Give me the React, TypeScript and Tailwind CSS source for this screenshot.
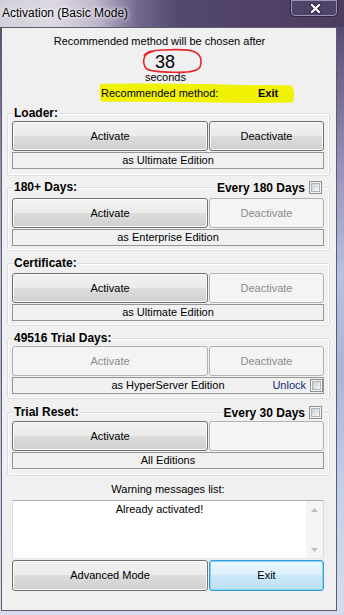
import React from "react";

const base =
  "flex items-center justify-center h-[30px] rounded-[3px] border text-[11px] leading-[13px]";
const normal =
  "border-[#707070] text-black bg-[linear-gradient(to_bottom,#f2f2f2_0%,#ebebeb_50%,#dddddd_50%,#cfcfcf_100%)] shadow-[inset_0_0_0_1px_#fbfbfb]";
const disabled = "border-[#adb2b5] text-[#8b8b8b] bg-[#f4f4f4]";

function Btn({ label, off }: { label?: string; off?: boolean }) {
  return <div className={`${base} ${off ? disabled : normal}`}>{label}</div>;
}

function CheckBox() {
  return (
    <span className="flex w-[13px] h-[13px] shrink-0 border border-[#8e8f8f] bg-[#f4f4f4] p-[1px]">
      <span className="flex-1 border border-[#aeb3b9] bg-[linear-gradient(135deg,#c9cdd2_0%,#e2e4e6_55%,#f8f8f8_100%)]" />
    </span>
  );
}

function Group({
  title,
  right,
  box,
  leftOff,
  rightLabel,
  rightOff,
  children,
}: {
  title: string;
  right?: string;
  box: string;
  leftOff?: boolean;
  rightLabel?: string;
  rightOff?: boolean;
  children: React.ReactNode;
}) {
  return (
    <div
      className={`relative ml-[5px] w-[323px] rounded-[3px] border border-[#d5dfe5] shadow-[inset_0_0_0_1px_#ffffff] pl-[4px] pr-[5px] ${box}`}
    >
      <span className="absolute -top-[7px] left-[5px] bg-[#f0f0f0] px-[1px] text-[12px] leading-[12px] font-bold">
        {title}
      </span>
      {right && (
        <div className="absolute -top-[7px] right-[5px] flex h-[13px] items-center gap-[4px] bg-[#f0f0f0] px-[2px]">
          <span className="text-[12px] leading-[12px] font-bold">{right}</span>
          <CheckBox />
        </div>
      )}
      <div className="grid grid-cols-[196px_115px] gap-x-[1px]">
        <Btn label="Activate" off={leftOff} />
        <Btn label={rightLabel} off={rightOff} />
      </div>
      <div className="mt-[1px] h-[17px] border border-[#959595] bg-[#f0f0f0] text-[11px] leading-[13px]">
        {children}
      </div>
    </div>
  );
}

function Centered({ text }: { text: string }) {
  return <div className="flex h-full items-center justify-center">{text}</div>;
}

export default function App() {
  return (
    <div className="w-[344px] h-[615px] overflow-hidden font-['Liberation_Sans',Arial,sans-serif] text-black bg-[linear-gradient(to_bottom,#4b3e60_0%,#6d6290_12%,#9a92c0_28%,#b6c2e0_45%,#a9b3d9_60%,#c3d0ea_80%,#d5dded_100%)]">
      {/* Title bar */}
      <div className="flex h-[27px] bg-[linear-gradient(to_right,#d4d0da_0%,#dcd8e2_16%,#bfb7cc_28%,#75688e_40%,#54476c_52%,#4a3d60_100%)]">
        <span className="pl-[2px] pt-[6px] text-[12px] leading-[14px] [text-shadow:0_0_6px_rgba(255,255,255,0.95),0_0_3px_rgba(255,255,255,0.95)]">
          Activation (Basic Mode)
        </span>
        <div className="ml-auto mr-[6px] -mt-px flex h-[18px] w-[48px] items-center justify-center rounded-b-[5px] border border-[#2c2440] bg-[#4f4369] shadow-[inset_0_0_0_1px_#9d93b6]">
          <svg width="13" height="11" viewBox="0 0 13 11" className="mt-[1px] ml-[2px]">
            <path d="M3 2 L10 9 M10 2 L3 9" stroke="#2a2238" strokeWidth="4" strokeLinecap="square" />
            <path d="M3 2 L10 9 M10 2 L3 9" stroke="#ffffff" strokeWidth="2.2" strokeLinecap="square" />
          </svg>
        </div>
      </div>

      {/* Client area */}
      <div className="ml-[1px] w-[336px] flex flex-col border border-[#5e5e6a] bg-[#f0f0f0] pt-[7px] pb-[19px] text-[11px] leading-[13px]">
        <div className="w-[315px] text-center">Recommended method will be chosen after</div>
        <div className="relative mt-[5px] w-[326px] text-center text-[18px] leading-[18px]">
          38
          <svg
            className="absolute left-[139px] -top-[5px]"
            width="66"
            height="28"
            viewBox="0 0 66 28"
            fill="none"
          >
            <path
              d="M3 8 C 6 3, 12 2.5, 22 2 C 35 1.3, 48 1, 54 4 C 60 7, 61 13, 59 19 C 56 24, 45 24.5, 35 24.3 C 22 24, 10 24, 6 21 C 2 18, 2 12, 4 8 C 6 5, 9 4, 13 3"
              stroke="#e3262b"
              strokeWidth="1.6"
            />
          </svg>
        </div>
        <div className="w-[327px] text-center">seconds</div>
        <div className="relative mt-[3px] flex h-[13px]">
          <svg className="absolute left-[96px] -top-[4px]" width="198" height="21" viewBox="0 0 198 21">
            <path
              d="M2 0.8 Q 60 0 110 1 Q 140 2.6 170 2 L 194 2.4 Q 197.5 10 195 19.5 L 150 20 Q 80 18.5 3 18.7 Q 1 10 2 0.8 Z"
              fill="#f1f105"
            />
          </svg>
          <span className="relative ml-[99px] w-[157px]">Recommended method:</span>
          <span className="relative font-bold">Exit</span>
        </div>

        <Group title="Loader:" box="mt-[13px] pt-[7px] pb-[6px]" rightLabel="Deactivate">
          <Centered text="as Ultimate Edition" />
        </Group>

        <Group
          title="180+ Days:"
          right="Every 180 Days"
          box="mt-[11px] pt-[10px] pb-[4px]"
          rightLabel="Deactivate"
          rightOff
        >
          <Centered text="as Enterprise Edition" />
        </Group>

        <Group title="Certificate:" box="mt-[12px] pt-[9px] pb-[4px]" rightLabel="Deactivate" rightOff>
          <Centered text="as Ultimate Edition" />
        </Group>

        <Group
          title="49516 Trial Days:"
          box="mt-[12px] pt-[7px] pb-[4px]"
          leftOff
          rightLabel="Deactivate"
          rightOff
        >
          <div className="grid h-full grid-cols-[1fr_auto_1fr] items-center">
            <span />
            <span>as HyperServer Edition</span>
            <div className="flex items-center justify-end gap-[4px]">
              <span className="text-[#15297a]">Unlock</span>
              <CheckBox />
            </div>
          </div>
        </Group>

        <Group
          title="Trial Reset:"
          right="Every 30 Days"
          box="mt-[13px] pt-[8px] pb-[6px]"
          rightOff
        >
          <Centered text="All Editions" />
        </Group>

        <div className="mt-[7px] ml-[10px] w-[312px] text-center">Warning messages list:</div>

        <div className="mt-[4px] ml-[10px] flex h-[59px] w-[312px] border border-[#abadb3] border-l-[#dadce3] border-r-[#dadce3] border-b-[#e3e9ef] bg-white">
          <div className="flex-1 pt-[2px] text-center">Already activated!</div>
          <div className="flex w-[17px] flex-col justify-between bg-[#f4f4f4]">
            <div className="flex h-[17px] items-center justify-center">
              <svg width="7" height="4" viewBox="0 0 7 4">
                <path d="M0 4 L3.5 0 L7 4 Z" fill="#bdbdbd" />
              </svg>
            </div>
            <div className="flex h-[17px] items-center justify-center">
              <svg width="7" height="4" viewBox="0 0 7 4">
                <path d="M0 0 L3.5 4 L7 0 Z" fill="#bdbdbd" />
              </svg>
            </div>
          </div>
        </div>

        <div className="mt-[1px] ml-[10px] grid h-[31px] w-[312px] grid-cols-[196px_115px] gap-x-[1px]">
          <div className={`${base} h-[31px] ${normal}`}>Advanced Mode</div>
          <div className="flex h-[31px] items-center justify-center rounded-[3px] border border-[#3c9bd6] bg-[linear-gradient(to_bottom,#ecf7fd_0%,#dcf0fb_50%,#cbe8f8_50%,#bde1f4_100%)] shadow-[inset_0_0_0_1px_#7fd8fa]">
            Exit
          </div>
        </div>
      </div>
    </div>
  );
}
